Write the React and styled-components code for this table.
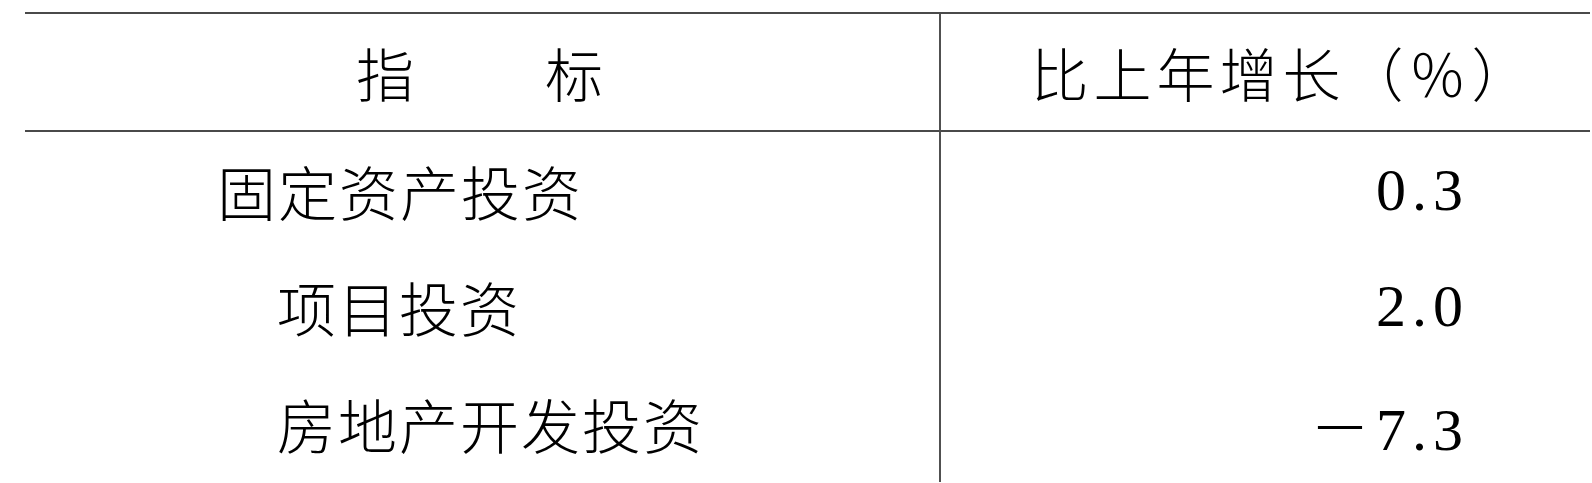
import styled, { createGlobalStyle } from "styled-components";

const GlobalStyle = createGlobalStyle`
    html, body {
        margin: 0;
        padding: 0;
        background: #ffffff;
    }
`

const StyledTable = styled.div`
    display: grid;
    grid-template-columns: 916px 1fr;
    width: 1565px;
    margin-left: 25px;
    margin-top: 12px;
    border-top: 2px solid #4a4a4a;
    font-family: "Liberation Serif", "Noto Sans CJK SC", serif;
    font-weight: 300;
    color: #000000;
    text-spacing-trim: space-all;
`

const StyledHeadCell = styled.div`
    height: 118px;
    box-sizing: border-box;
    display: flex;
    align-items: center;
    justify-content: center;
    padding-left: ${props => props.shift || 0}px;
    font-size: 58px;
    letter-spacing: ${props => props.spacing}px;
    border-bottom: 2px solid #4a4a4a;
    border-right: ${props => props.divider ? "2px solid #505050" : "none"};
    white-space: nowrap;
`

const StyledNameCell = styled.div`
    height: 116.6px;
    display: flex;
    align-items: center;
    padding-left: ${props => props.indent}px;
    font-size: 59px;
    letter-spacing: 2px;
    border-right: 2px solid #505050;
    white-space: nowrap;
`

const StyledValueCell = styled.div`
    height: 116.6px;
    display: flex;
    align-items: center;
    justify-content: flex-end;
    padding-right: 121px;
    font-size: 60px;
    letter-spacing: 6px;
    white-space: nowrap;
`

const rows = [
    { name: "固定资产投资", indent: 192, value: "0.3" },
    { name: "项目投资", indent: 252, value: "2.0" },
    { name: "房地产开发投资", indent: 252, value: "－7.3" },
]

export default function App() {
    return (
        <>
            <GlobalStyle />
            <StyledTable>
                <StyledHeadCell divider spacing={5}>指　　标</StyledHeadCell>
                <StyledHeadCell spacing={5} shift={34}>比上年增长（％）</StyledHeadCell>
                {rows.map(row => (
                    <>
                        <StyledNameCell key={row.name + "n"} indent={row.indent}>{row.name}</StyledNameCell>
                        <StyledValueCell key={row.name + "v"}>{row.value}</StyledValueCell>
                    </>
                ))}
            </StyledTable>
        </>
    )
}
